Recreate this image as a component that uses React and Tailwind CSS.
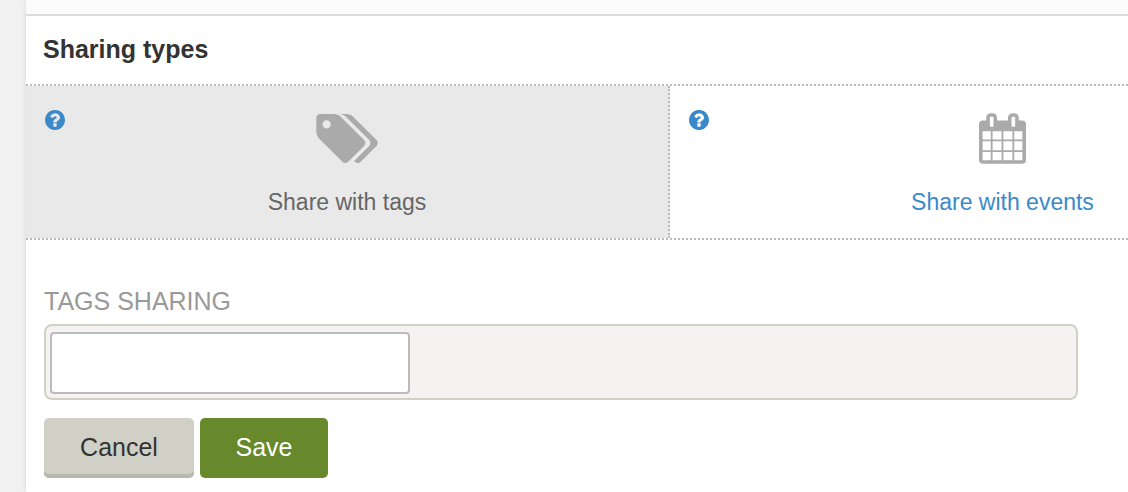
import React from 'react';

const QuestionIcon = () => (
  <svg viewBox="128 128 1536 1536" className="block h-5 w-5" fill="currentColor" aria-hidden="true">
    <path d="M1024 1376v-192q0-14-9-23t-23-9h-192q-14 0-23 9t-9 23v192q0 14 9 23t23 9h192q14 0 23-9t9-23zm256-672q0-88-55.5-163t-138.5-116-170-41q-243 0-371 213-15 24 8 42l132 100q7 6 19 6 16 0 25-12 53-68 86-92 34-24 86-24 48 0 85.5 26t37.5 59q0 38-20 61t-68 45q-63 28-115.5 86.5t-52.5 125.5v36q0 14 9 23t23 9h192q14 0 23-9t9-23q0-19 21.5-49.5t54.5-49.5q32-18 49-28.5t46-35 44.5-48 28-60.5 12.5-81zm384 192q0 209-103 385.5t-279.5 279.5-385.5 103-385.5-103-279.5-279.5-103-385.5 103-385.5 279.5-279.5 385.5-103 385.5 103 279.5 279.5 103 385.5z" />
  </svg>
);

const TagsIcon = () => (
  <svg viewBox="0 128 1899 1515" className="h-[49px] w-[62px]" fill="currentColor" aria-hidden="true">
    <path d="M448 448q0-53-37.5-90.5t-90.5-37.5-90.5 37.5-37.5 90.5 37.5 90.5 90.5 37.5 90.5-37.5 37.5-90.5zm1067 576q0 53-37 90l-491 492q-39 37-91 37-53 0-90-37l-715-716q-38-37-64.5-101t-26.5-117v-416q0-52 38-90t90-38h416q53 0 117 26.5t102 64.5l715 714q37 39 37 91zm384 0q0 53-37 90l-491 492q-39 37-91 37-36 0-59-14t-53-45l470-470q37-37 37-90 0-52-37-91l-715-714q-38-38-102-64.5t-117-26.5h224q53 0 117 26.5t102 64.5l715 714q37 39 37 91z" />
  </svg>
);

const CalendarIcon = () => (
  <svg viewBox="64 0 1664 1792" className="h-[51px] w-[47px]" fill="currentColor" aria-hidden="true">
    <path d="M192 1664h288v-288h-288v288zm352 0h320v-288h-320v288zm-352-352h288v-320h-288v320zm352 0h320v-320h-320v320zm-352-384h288v-288h-288v288zm736 736h320v-288h-320v288zm-384-736h320v-288h-320v288zm768 736h288v-288h-288v288zm-384-352h320v-320h-320v320zm-352-864v-288q0-13-9.5-22.5t-22.5-9.5h-64q-13 0-22.5 9.5t-9.5 22.5v288q0 13 9.5 22.5t22.5 9.5h64q13 0 22.5-9.5t9.5-22.5zm736 864h288v-320h-288v320zm-384-384h320v-288h-320v288zm384 0h288v-288h-288v288zm32-480v-288q0-13-9.5-22.5t-22.5-9.5h-64q-13 0-22.5 9.5t-9.5 22.5v288q0 13 9.5 22.5t22.5 9.5h64q13 0 22.5-9.5t9.5-22.5zm384-64v1280q0 52-38 90t-90 38h-1408q-52 0-90-38t-38-90v-1280q0-52 38-90t90-38h128v-96q0-66 47-113t113-47h64q66 0 113 47t47 113v96h384v-96q0-66 47-113t113-47h64q66 0 113 47t47 113v96h128q52 0 90 38t38 90z" />
  </svg>
);

// the help link floats in the tile's corner so the icon and caption stay centred
const ShareTile = ({ label, icon, className, linkClassName }) => (
  <div className={`relative h-[152px] shrink-0 ${className}`}>
    <a href="#help" aria-label={`Help: ${label}`} className="absolute top-6 left-[19px] text-[#3b89c9]">
      <QuestionIcon />
    </a>
    <a href="#share" className={`flex flex-col items-center pt-[27px] text-[23px] leading-7 ${linkClassName}`}>
      <span className="mb-6 flex h-[51px] items-center text-[#aaaaaa]">{icon}</span>
      {label}
    </a>
  </div>
);

export default function App() {
  return (
    <div className="flex min-h-screen overflow-hidden bg-[#f1f1f1] pl-[26px] font-['Liberation_Sans',Arial,sans-serif]">
      <main className="min-w-0 flex-1 bg-white shadow-[0_0_4px_rgba(0,0,0,0.12)]">
        <div className="h-4 border-b-2 border-[#dddddd] bg-[#fbfbfb]" />
        <h2 className="px-[17px] pt-[17px] pb-[19px] text-[25px] leading-8 font-bold text-[#333333]">Sharing types</h2>

        <div className="flex overflow-hidden border-y-2 border-dotted border-[#bbbbbb]">
          <ShareTile
            label="Share with tags"
            icon={<TagsIcon />}
            className="w-[58.44%] border-r-2 border-dotted border-[#bbbbbb] bg-[#e9e9e9]"
            linkClassName="text-[#666666]"
          />
          <ShareTile
            label="Share with events"
            icon={<CalendarIcon />}
            className="w-[60.34%]"
            linkClassName="text-[#3b89c9]"
          />
        </div>

        <form className="pt-[45px] pr-[50px] pb-3 pl-[18px]" onSubmit={(e) => e.preventDefault()}>
          <label htmlFor="tags" className="block text-[25px] leading-8 text-[#999999]">
            TAGS SHARING
          </label>
          <div className="mt-[7px] rounded-lg border-2 border-[#d0d0c5] bg-[#f4f3f1] px-1 pt-1.5 pb-1">
            <input
              id="tags"
              type="text"
              className="block h-[62px] w-[360px] max-w-full rounded border-2 border-[#bbbbbb] bg-white px-3 text-[25px] outline-none"
            />
          </div>
          <div className="mt-[18px] flex gap-1.5">
            <button
              type="button"
              className="h-[60px] w-[150px] rounded-[5px] bg-[#d0d0c7] text-[25px] text-[#333333] shadow-[inset_0_-4px_0_#b8b7af]"
            >
              Cancel
            </button>
            <button type="submit" className="h-[60px] w-32 rounded-[5px] bg-[#67892c] text-[25px] text-white">
              Save
            </button>
          </div>
        </form>
      </main>
    </div>
  );
}
